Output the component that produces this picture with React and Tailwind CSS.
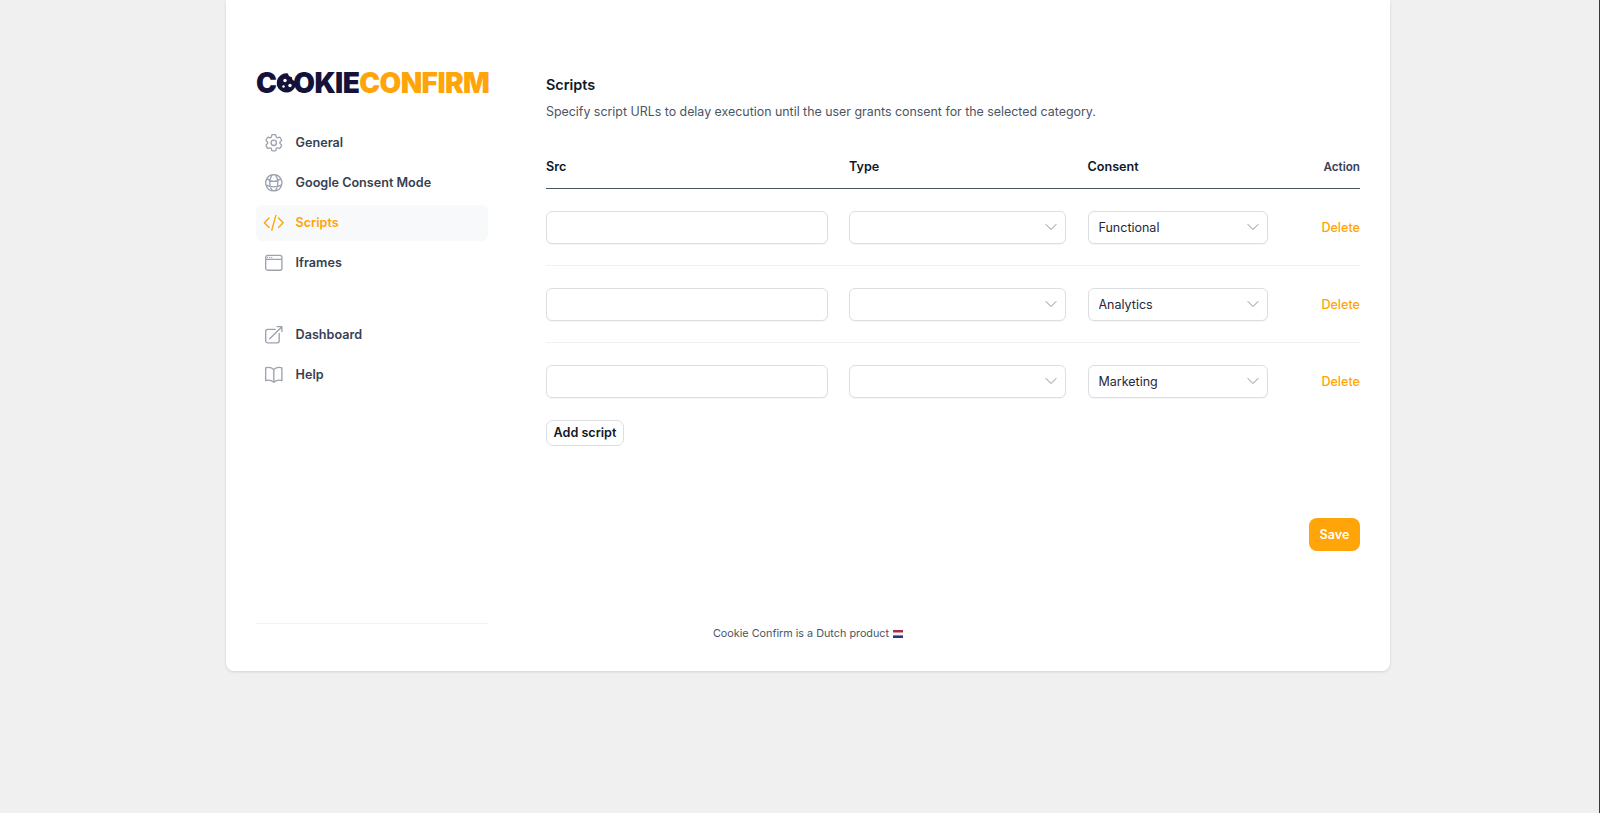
import {
  HiOutlineCog6Tooth,
  HiOutlineGlobeAlt,
  HiOutlineCodeBracket,
  HiOutlineWindow,
  HiOutlineArrowTopRightOnSquare,
  HiOutlineBookOpen,
  HiOutlineChevronDown,
} from "react-icons/hi2";

const topNav = [
  { label: "General", icon: HiOutlineCog6Tooth },
  { label: "Google Consent Mode", icon: HiOutlineGlobeAlt },
  { label: "Scripts", icon: HiOutlineCodeBracket, active: true },
  { label: "Iframes", icon: HiOutlineWindow },
];

const bottomNav = [
  { label: "Dashboard", icon: HiOutlineArrowTopRightOnSquare },
  { label: "Help", icon: HiOutlineBookOpen },
];

const rows = ["Functional", "Analytics", "Marketing"];

const columns = "grid grid-cols-[281.5px_217px_180px_1fr] gap-x-[21.5px]";

const NavItem = ({ item }) => {
  const Icon = item.icon;
  return (
    <a
      href="#"
      className={`flex h-9 items-center gap-x-[11px] rounded-md pl-[7px] text-[12.6px] font-semibold ${
        item.active ? "bg-[#f8f9fa] text-[#ffa409]" : "text-[#374151]"
      }`}
    >
      <Icon className={`h-[21.6px] w-[21.6px] ${item.active ? "text-[#ffa409]" : "text-[#9ca3af]"}`} />
      {item.label}
    </a>
  );
};

const Logo = () => (
  <div className="flex h-6 items-center whitespace-nowrap text-[28px] leading-none font-black tracking-[-0.6px]">
    <span className="text-[#14123a]">C</span>
    <svg viewBox="0 0 24 24" className="-mr-[7px] h-[24px] w-[24px] shrink-0">
      <path
        d="M12 2.5a4 4 0 0 0 3.8 3.6 4 4 0 0 0 4 4A9.6 9.6 0 1 1 12 2.5z"
        fill="#14123a"
      />
      <circle cx="9" cy="9.5" r="1.7" fill="#fff" />
      <circle cx="14" cy="14.5" r="1.7" fill="#fff" />
      <circle cx="7.5" cy="15.5" r="1.2" fill="#fff" />
    </svg>
    <span className="text-[#14123a]">OKIE</span>
    <span className="text-[#ffa409]">CONFIRM</span>
  </div>
);

const Select = ({ value, options }) => (
  <div className="relative">
    <select
      defaultValue={value}
      className="h-[33px] w-full appearance-none rounded-md border border-[#dcdee2] bg-white pl-[10px] pr-8 pt-[2px] text-[12.5px] text-[#1f2937] shadow-[0_1px_1px_rgba(0,0,0,0.04)]"
    >
      <option value=""></option>
      {options.map((o) => (
        <option key={o}>{o}</option>
      ))}
    </select>
    <HiOutlineChevronDown className="pointer-events-none absolute right-[7px] top-[8px] h-4 w-4 text-[#8b9099]" />
  </div>
);

export default function App() {
  return (
    <div className="flex h-screen justify-center overflow-hidden border-r border-[#3a3a3a] bg-[#f0f0f0] pl-[17px] font-['Inter',sans-serif] antialiased">
      <div className="h-[671px] w-[1164px] rounded-b-lg bg-white px-[30px] pt-[71px] shadow-[0_1px_3px_rgba(0,0,0,0.12)]">
        <div className="flex h-[552px] gap-x-[58px]">
          {/* SIDEBAR */}
          <div className="w-[232px] shrink-0">
            <Logo />
            <div className="mt-[30px] flex flex-col gap-y-1">
              {topNav.map((item) => (
                <NavItem key={item.label} item={item} />
              ))}
            </div>
            <div className="mt-9 flex flex-col gap-y-1">
              {bottomNav.map((item) => (
                <NavItem key={item.label} item={item} />
              ))}
            </div>
          </div>

          {/* MAIN */}
          <div className="flex-1 pt-[2px]">
            <h2 className="text-[14.4px] leading-6 font-semibold text-[#111827]">Scripts</h2>
            <p className="mt-[5px] text-[12.4px] leading-5 text-[#4b5563]">
              Specify script URLs to delay execution until the user grants consent for the selected category.
            </p>

            <div className={`${columns} mt-[25px] h-[42px] items-start border-b border-[#4b5563] pt-[10px] text-[12.6px] leading-5 font-semibold text-[#111827]`}>
              <div>Src</div>
              <div>Type</div>
              <div>Consent</div>
              <div className="text-right text-[11.7px] text-[#374151]">Action</div>
            </div>

            {rows.map((consent, i) => (
              <div
                key={consent}
                className={`${columns} items-center pt-[22px] ${
                  i < rows.length - 1 ? "border-b border-[#f1f2f4] pb-[21px]" : "pb-[21px]"
                }`}
              >
                <input
                  type="text"
                  className="h-[33px] w-full rounded-md border border-[#dcdee2] bg-white px-[10px] text-[12.6px] shadow-[0_1px_1px_rgba(0,0,0,0.04)]"
                />
                <Select value="" options={rows} />
                <Select value={consent} options={rows} />
                <a href="#" className="pt-[2px] text-right text-[12.6px] font-medium text-[#ffa409]">
                  Delete
                </a>
              </div>
            ))}

            <button className="h-[26px] w-[78px] rounded-[7px] border border-[#dcdee2] bg-white pt-[1px] text-[12.6px] font-semibold text-[#111827]">
              Add script
            </button>

            <div className="mt-[72px] flex justify-end">
              <button className="h-[33px] w-[51px] rounded-lg bg-[#ffa409] pt-[1px] text-[12.6px] font-semibold text-white">
                Save
              </button>
            </div>
          </div>
        </div>

        {/* FOOTER */}
        <div className="h-px w-[232px] bg-[#f1f2f4]"></div>
        <p className="flex items-center justify-center gap-x-1 text-[10.8px] leading-5 text-[#4b5563]">
          Cookie Confirm is a Dutch product
          <svg viewBox="0 0 10 8" className="h-2 w-[10px]">
            <rect width="10" height="2.7" y="0" fill="#ae2b47" />
            <rect width="10" height="2.7" y="2.7" fill="#f3f4f6" />
            <rect width="10" height="2.6" y="5.4" fill="#29357f" />
          </svg>
        </p>
      </div>
    </div>
  );
}
